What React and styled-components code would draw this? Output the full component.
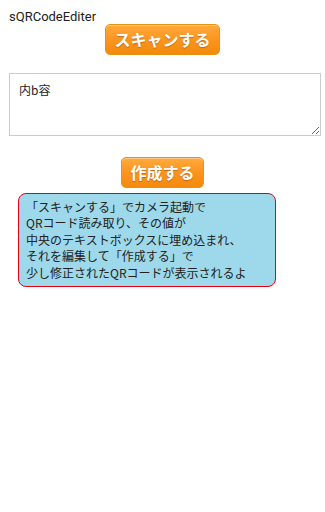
import React from 'react';
import styled, { createGlobalStyle } from 'styled-components';

const GlobalStyle = createGlobalStyle`
  body {
    margin: 0;
    background: #ffffff;
    font-family: Roboto, "Noto Sans CJK JP", sans-serif;
  }
`;

const Page = styled.div`
  width: 325px;
  min-height: 512px;
  box-sizing: border-box;
  background: #ffffff;
`;

const Title = styled.div`
  padding: 10px 0 0 9px;
  font-size: 13px;
  line-height: 14px;
  color: #222222;
`;

const OrangeButton = styled.button`
  display: block;
  height: 31px;
  margin: ${(props) => props.$margin || '0 auto'};
  padding: 0 8px;
  border: 1px solid #e9920f;
  border-radius: 5px;
  background: linear-gradient(to bottom, #ffaa3c 0%, #fb9520 50%, #f48a0c 100%);
  box-shadow: inset 0 1px 0 rgba(255, 255, 255, 0.35);
  color: #ffffff;
  font-family: "Noto Sans CJK JP", sans-serif;
  font-size: 16px;
  font-weight: 700;
  line-height: 29px;
  text-shadow: 0 1px 1px rgba(120, 60, 0, 0.45);
  cursor: pointer;
`;

const Body = styled.textarea`
  display: block;
  width: 312px;
  height: 63px;
  margin: 18px 0 0 9px;
  padding: 8px 9px;
  box-sizing: border-box;
  border: 1px solid #cccccc;
  border-radius: 0;
  font-family: "Noto Sans CJK JP", sans-serif;
  font-size: 12px;
  line-height: 16px;
  color: #222222;
  outline: none;
`;

const Note = styled.div`
  width: 258px;
  margin: 5px 0 0 18px;
  padding: 5px 8px 5px 7px;
  box-sizing: border-box;
  border: 1px solid #e60012;
  border-radius: 8px;
  background: #9dd9ea;
  font-family: "Noto Sans CJK JP", sans-serif;
  font-size: 12px;
  line-height: 16.4px;
  color: #222222;
`;

const lines = [
  '「スキャンする」でカメラ起動で',
  'QRコード読み取り、その値が',
  '中央のテキストボックスに埋め込まれ、',
  'それを編集して「作成する」で',
  '少し修正されたQRコードが表示されるよ',
];

const App = () => {
  return (
    <Page>
      <GlobalStyle />
      <Title>sQRCodeEditer</Title>
      <OrangeButton>スキャンする</OrangeButton>
      <Body defaultValue="内b容" />
      <OrangeButton $margin="21px auto 0">作成する</OrangeButton>
      <Note>
        {lines.map((line) => (
          <div key={line}>{line}</div>
        ))}
      </Note>
    </Page>
  );
};

export default App;
